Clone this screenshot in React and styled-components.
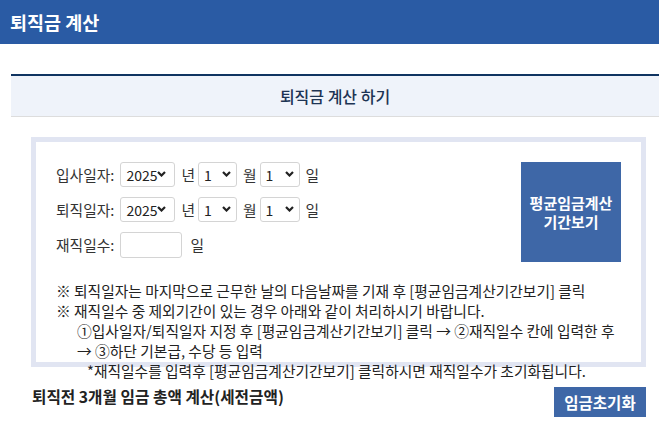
import React from 'react'
import styled, { createGlobalStyle } from 'styled-components'

const GlobalStyle = createGlobalStyle`
  body {
    margin: 0;
    background: #fff;
    font-family: "Noto Sans CJK KR", "Noto Sans", sans-serif;
    color: #222;
  }
`

const years = [2023, 2024, 2025, 2026]
const months = Array.from({ length: 12 }, (_, i) => i + 1)
const days = Array.from({ length: 31 }, (_, i) => i + 1)

const Chevron = () => (
  <svg width="9" height="6" viewBox="0 0 9 6">
    <path d="M1 1 L4.5 4.5 L8 1" fill="none" stroke="#222" strokeWidth="2.2" />
  </svg>
)

const Picker = ({ options, value, width, arrowRight }) => (
  <SelectWrap width={width}>
    <Select defaultValue={value}>
      {options.map(o => (
        <option key={o} value={o}>
          {o}
        </option>
      ))}
    </Select>
    <ChevronSlot right={arrowRight}>
      <Chevron />
    </ChevronSlot>
  </SelectWrap>
)

const DateRow = ({ label }) => (
  <FormRow>
    <Label>{label}:</Label>
    <Picker options={years} value={2025} width={55} arrowRight={9} />
    <Unit>년</Unit>
    <Picker options={months} value={1} width={39} arrowRight={6} />
    <Unit>월</Unit>
    <Picker options={days} value={1} width={40} arrowRight={6} />
    <Unit>일</Unit>
  </FormRow>
)

const App = () => (
  <>
    <GlobalStyle />
    <Header>퇴직금 계산</Header>
    <Section>
      <Band>퇴직금 계산 하기</Band>
      <Box>
        <Top>
          <Form>
            <DateRow label="입사일자" />
            <DateRow label="퇴직일자" />
            <FormRow>
              <Label>재직일수:</Label>
              <DaysInput type="text" />
              <Unit>일</Unit>
            </FormRow>
          </Form>
          <SquareButton>
            평균임금계산
            <br />
            기간보기
          </SquareButton>
        </Top>
        <Notes>
          <Note>※ 퇴직일자는 마지막으로 근무한 날의 다음날짜를 기재 후 [평균임금계산기간보기] 클릭</Note>
          <Note>※ 재직일수 중 제외기간이 있는 경우 아래와 같이 처리하시기 바랍니다.</Note>
          <Note indent={21}>①입사일자/퇴직일자 지정 후 [평균임금계산기간보기] 클릭 → ②재직일수 칸에 입력한 후</Note>
          <Note indent={21}>→ ③하단 기본급, 수당 등 입력</Note>
          <Note indent={31}>*재직일수를 입력후 [평균임금계산기간보기] 클릭하시면 재직일수가 초기화됩니다.</Note>
        </Notes>
      </Box>
      <BottomBar>
        <SubTitle>퇴직전 3개월 임금 총액 계산(세전금액)</SubTitle>
        <ResetButton>임금초기화</ResetButton>
      </BottomBar>
    </Section>
  </>
)

export default App

const Header = styled.div`
  height: 44px;
  background: #2a5ba4;
  color: #fff;
  font-size: 18.5px;
  font-weight: 700;
  display: flex;
  align-items: center;
  padding-left: 10px;
`

const Section = styled.div`
  margin: 30px 0 0 11px;
`

const Band = styled.div`
  border-top: 2px solid #0f3461;
  border-bottom: 1px solid #dddddd;
  background: #eff3fa;
  height: 40px;
  display: flex;
  align-items: center;
  justify-content: center;
  font-size: 16px;
  font-weight: 500;
  color: #1d3454;
`

const Box = styled.div`
  box-sizing: border-box;
  height: 230px;
  margin: 20px 13px 0 20px;
  border: 5px solid #e1e5f2;
  padding: 20px 20px 0 20px;
`

const Top = styled.div`
  display: flex;
  justify-content: space-between;
  align-items: flex-start;
`

const Form = styled.div`
  display: flex;
  flex-direction: column;
  gap: 10px;
`

const FormRow = styled.div`
  display: flex;
  align-items: center;
  height: 25px;
  font-size: 14.75px;
  color: #333;
`

const Label = styled.span`
  margin-right: 6px;
`

const Unit = styled.span`
  margin: 0 3px 0 6px;
`

const SelectWrap = styled.div`
  position: relative;
  width: ${({ width }) => width}px;
  height: 25px;
`

const Select = styled.select`
  appearance: none;
  box-sizing: border-box;
  width: 100%;
  height: 100%;
  border: 1px solid #d4d4d4;
  border-radius: 3px;
  background: #fff;
  padding: 0 0 0 5px;
  font-family: "Noto Sans CJK KR", sans-serif;
  font-size: 14px;
  color: #222;
  outline: none;
`

const ChevronSlot = styled.span`
  position: absolute;
  right: ${({ right }) => right}px;
  top: 9px;
  display: flex;
  pointer-events: none;
`

const DaysInput = styled.input`
  box-sizing: border-box;
  width: 62px;
  height: 26px;
  border: 1px solid #d4d4d4;
  border-radius: 3px;
  outline: none;
  padding: 0 4px;
  margin-right: 2px;
`

const SquareButton = styled.button`
  width: 100px;
  height: 100px;
  border: none;
  background: #3e67a7;
  color: #fff;
  font-family: "Noto Sans CJK KR", sans-serif;
  font-size: 15px;
  font-weight: 700;
  line-height: 19px;
  padding: 0;
  flex-shrink: 0;
`

const Notes = styled.div`
  margin-top: 19px;
  font-size: 14.75px;
  line-height: 20px;
  color: #222;
  white-space: nowrap;
`

const Note = styled.div`
  padding-left: ${({ indent }) => indent || 0}px;
`

const BottomBar = styled.div`
  display: flex;
  justify-content: space-between;
  align-items: flex-start;
  margin: 20px 13px 0 21px;
`

const SubTitle = styled.div`
  font-size: 15.7px;
  line-height: 20px;
  font-weight: 700;
  color: #222;
`

const ResetButton = styled.button`
  height: 30px;
  width: 92px;
  border: none;
  background: #3e67a7;
  color: #fff;
  font-family: "Noto Sans CJK KR", sans-serif;
  font-size: 15.5px;
  font-weight: 700;
  padding: 0;
`
